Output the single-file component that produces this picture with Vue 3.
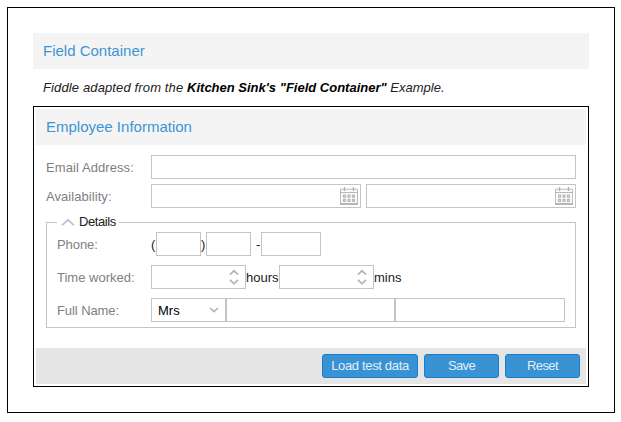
<script setup>
const dots = [0, 1, 2].flatMap((c) => [0, 1].map((r) => ({ x: 3.5 + c * 4.5, y: 8 + r * 4.3 })))
</script>

<template>
  <main class="frame">
    <h1 class="head">Field Container</h1>
    <p class="intro"><span class="lead">Fiddle adapted from the </span><b>Kitchen Sink's "Field Container"</b> <span>Example.</span></p>
    <form class="panel" @submit.prevent>
      <h2 class="head inner">Employee Information</h2>
      <div class="body">
        <div class="row">
          <label class="label email">Email Address:</label>
          <div class="field grow"></div>
        </div>
        <div class="row dates">
          <label class="label avail">Availability:</label>
          <div v-for="n in 2" :key="n" class="field date grow">
            <svg class="cal" width="18" height="18" viewBox="0 0 18 18">
              <path d="M.5 2.2h17v14.5H.5z" fill="#fafafa" stroke="#bbb" />
              <path d="M0 5.5h18" stroke="#b8b8b8" />
              <path d="M0 17h18" stroke="#b3b3b3" stroke-width="1.8" />
              <path d="M4.5 0v4M13.5 0v4" stroke="#b0b0b0" stroke-width="1.3" />
              <rect v-for="(d, i) in dots" :key="i" :x="d.x" :y="d.y" width="2" height="2.1" rx=".4" fill="#fafafa" stroke="#b0b0b0" stroke-width="1.1" />
            </svg>
          </div>
        </div>
        <section class="details">
          <div class="legend">
            <svg width="14" height="8" viewBox="0 0 14 8"><path d="M1 7.3 7 1.8 13 7.3" fill="none" stroke="#c4c4c4" stroke-width="1.8" /></svg>
            <span>Details</span>
          </div>
          <div class="row">
            <label class="label short phone">Phone:</label>
            <span class="paren">(</span><div class="field p1"></div><span class="paren">)</span><div class="field p1"></div><span class="dash">-</span><div class="field p2"></div>
          </div>
          <div class="row">
            <label class="label short">Time worked:</label>
            <template v-for="unit in ['hours', 'mins']" :key="unit">
              <div class="field spin">
                <svg width="10" height="16" viewBox="0 0 10 16"><path d="M1 5.7 5 1.8 9 5.7M1 10.9l4 3.9 4-3.9" fill="none" stroke="#b5b5b5" stroke-width="1.7" /></svg>
              </div>
              <span class="unit" :class="unit">{{ unit }}</span>
            </template>
          </div>
          <div class="row">
            <label class="label short name">Full Name:</label>
            <div class="field select">
              <span>Mrs</span>
              <svg width="10" height="6" viewBox="0 0 10 6"><path d="M1 1l4 3.7L9 1" fill="none" stroke="#b5b5b5" stroke-width="1.6" /></svg>
            </div>
            <div class="field first"></div>
            <div class="field last"></div>
          </div>
        </section>
      </div>
      <footer class="bar">
        <button class="btn load">Load test data</button>
        <button class="btn save">Save</button>
        <button class="btn reset">Reset</button>
      </footer>
    </form>
  </main>
</template>

<style>
body { background: #fff; }
</style>

<style scoped>
* { box-sizing: border-box; }
.frame {
  width: 608px;
  height: 406px;
  margin: 7px;
  padding: 25px;
  border: 1px solid #000;
  font: 13px/24px "Liberation Sans", Arial, sans-serif;
  color: #222;
  white-space: nowrap;
}
.head {
  height: 36px;
  margin: 0;
  padding-left: 10px;
  background: #f4f4f4;
  color: #3e94d3;
  font-size: 15px;
  font-weight: 400;
  line-height: 36px;
}
.intro {
  height: 37px;
  margin: 0;
  padding-left: 10px;
  font-style: italic;
  line-height: 37px;
}
.lead { letter-spacing: .13px; }
.intro b { color: #000; }
.panel {
  height: 281px;
  padding: 2px;
  border: 1px solid #000;
}
.body { height: 203px; padding: 10px 10px 0; }
.row { display: flex; height: 24px; }
.dates { margin-top: 5px; gap: 5px; }
.label { flex: none; width: 105px; color: #808080; line-height: 25px; }
.email { letter-spacing: .08px; }
.avail { margin-right: -5px; letter-spacing: .06px; }
.short { width: 94px; }
.phone, .name { letter-spacing: -.08px; }
.field { flex: none; height: 24px; border: 1px solid #c4c4c4; background: #fff; }
.grow { flex: 1; }
.date { display: flex; justify-content: flex-end; padding: 2px 2px 0 0; }
.details {
  height: 106px;
  margin-top: 14px;
  padding-left: 10px;
  border: 1px solid #c4c4c4;
}
.details .row + .row { margin-top: 9px; }
.legend {
  display: flex;
  align-items: center;
  gap: 4px;
  width: 62px;
  height: 16px;
  margin: -9px 0 2px;
  padding-left: 4px;
  background: #fff;
  line-height: 16px;
  letter-spacing: -.4px;
}
.paren { width: 5px; line-height: 25px; }
.p1 { width: 45px; }
.p2 { width: 60px; }
.dash { width: 10px; padding-left: 5px; line-height: 25px; }
.spin { display: flex; justify-content: flex-end; width: 95px; padding: 3px 6px 0 0; }
.unit { line-height: 25px; }
.hours { width: 33px; }
.select { display: flex; justify-content: space-between; align-items: center; width: 75px; padding: 0 6px; color: #000; line-height: 25px; }
.first { width: 169px; }
.last { width: 170px; }
.bar {
  display: flex;
  justify-content: flex-end;
  gap: 6px;
  height: 36px;
  padding: 6px;
  background: #e5e5e5;
}
.btn {
  width: 75px;
  height: 24px;
  padding: 0;
  border: 1px solid #157fcc;
  border-radius: 3px;
  background: #3892d4;
  color: #e0eff9;
  font: 13px/22px "Liberation Sans", Arial, sans-serif;
}
.load { width: 96px; letter-spacing: -.34px; }
.save, .reset { letter-spacing: -.6px; }
</style>
